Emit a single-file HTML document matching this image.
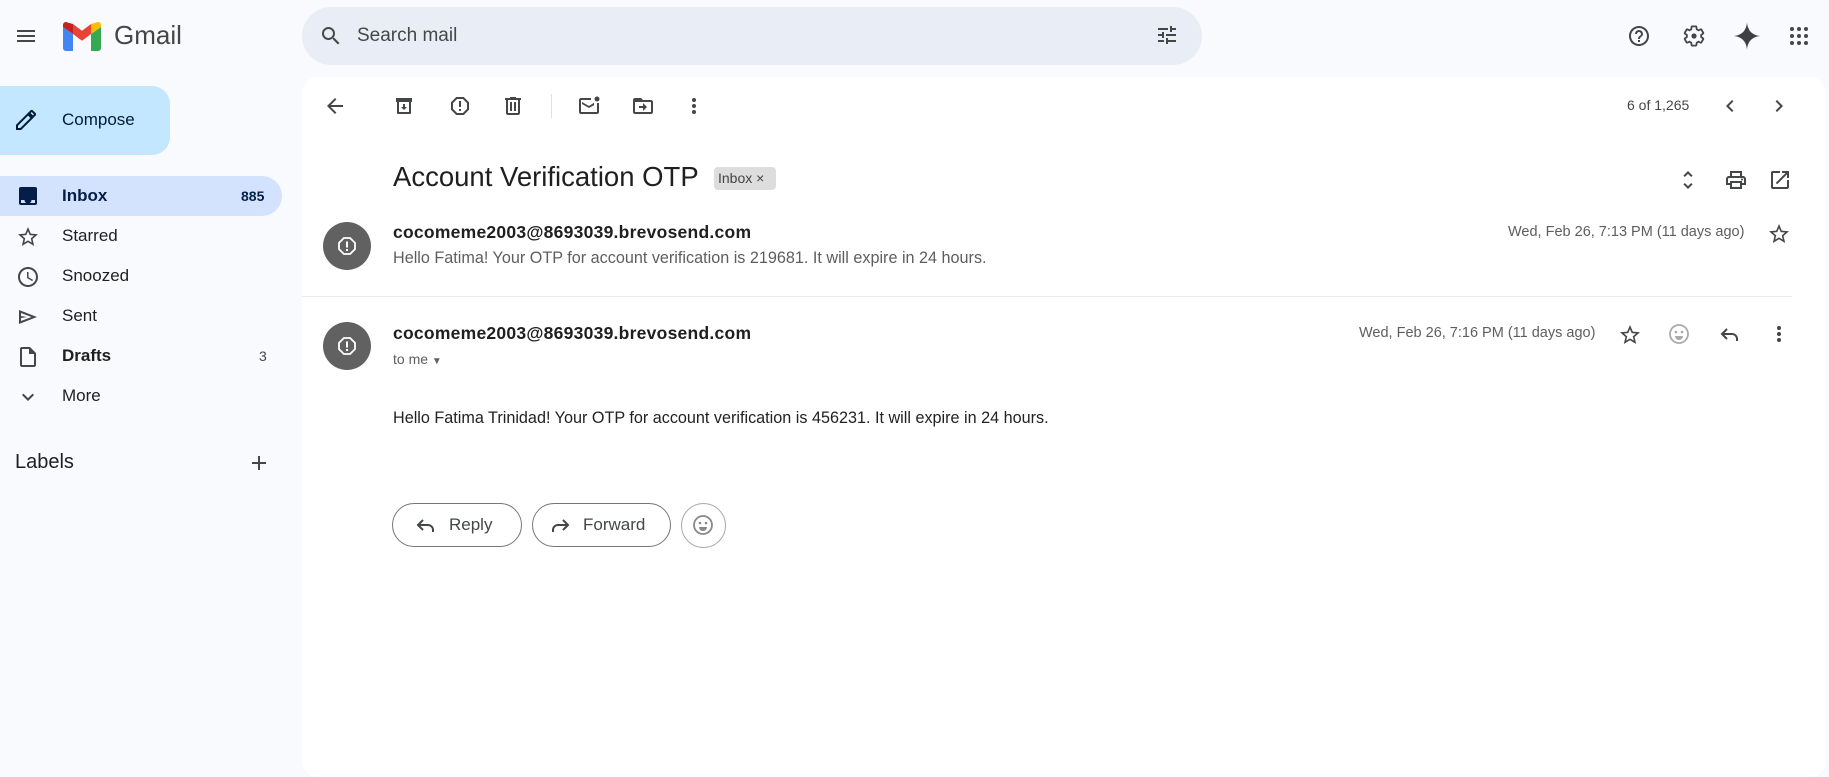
<!DOCTYPE html>
<html><head><meta charset="utf-8"><style>
*{margin:0;padding:0;box-sizing:border-box}
body{width:1829px;height:755px;overflow:hidden;background:#f8fafd;font-family:"Liberation Sans",Arial,sans-serif;color:#1f1f1f;position:relative}
.a{position:absolute}
svg{display:block}
.ic{position:absolute;width:24px;height:24px;fill:#444746}
.nav{position:absolute;left:62px;font-size:17px;color:#1f1f1f}
</style></head><body>
<!-- header -->
<svg class="ic" style="left:14px;top:24px" viewBox="0 0 24 24"><path d="M3 18h18v-2H3v2zm0-5h18v-2H3v2zm0-7v2h18V6H3z"/></svg>
<svg class="a" style="left:63px;top:22px" width="38" height="29" viewBox="0 0 38 29">
<path d="M3 29h7V12L0 5v21c0 1.7 1.3 3 3 3z" fill="#4285f4"/>
<path d="M28 29h7c1.7 0 3-1.3 3-3V5l-10 7z" fill="#34a853"/>
<path d="M28 2v10l10-7V3c0-2.5-2.8-3.9-4.8-2.4z" fill="#fbbc04"/>
<path d="M10 12V2l9 6.8L28 2v10l-9 6.8z" fill="#ea4335"/>
<path d="M0 3v2l10 7V2L4.8.6C2.8-.9 0 .5 0 3z" fill="#c5221f"/>
</svg>
<div class="a" style="left:114px;top:20px;font-size:26px;color:#444746">Gmail</div>
<div class="a" style="left:302px;top:7px;width:900px;height:58px;border-radius:29px;background:#e9eef6"></div>
<svg class="ic" style="left:319px;top:24px" viewBox="0 0 24 24"><path d="M15.5 14h-.79l-.28-.27A6.47 6.47 0 0 0 16 9.5 6.5 6.5 0 1 0 9.5 16c1.61 0 3.090-.59 4.23-1.57l.27.28v.79l5 4.99L20.49 19l-4.99-5zm-6 0C7.01 14 5 11.99 5 9.5S7.01 5 9.5 5 14 7.01 14 9.5 11.99 14 9.5 14z"/></svg>
<div class="a" style="left:357px;top:25px;font-size:19px;color:#444746">Search mail</div>
<svg class="ic" style="left:1155px;top:23px" viewBox="0 0 24 24"><path d="M3 17v2h6v-2H3zM3 5v2h10V5H3zm10 16v-2h8v-2h-8v-2h-2v6h2zM7 9v2H3v2h4v2h2V9H7zm14 4v-2H11v2h10zm-6-4h2V7h4V5h-4V3h-2v6z"/></svg>
<svg class="ic" style="left:1627px;top:24px" viewBox="0 0 24 24"><path d="M11 18h2v-2h-2v2zm1-16C6.48 2 2 6.48 2 12s4.48 10 10 10 10-4.48 10-10S17.52 2 12 2zm0 18c-4.410 0-8-3.59-8-8s3.59-8 8-8 8 3.59 8 8-3.59 8-8 8zm0-14c-2.21 0-4 1.79-4 4h2c0-1.1.9-2 2-2s2 .9 2 2c0 2-3 1.75-3 5h2c0-2.25 3-2.5 3-5 0-2.21-1.79-4-4-4z"/></svg>
<svg class="ic" style="left:1682px;top:24px" viewBox="0 0 24 24"><path d="M19.14 12.94c.04-.3.06-.61.06-.94 0-.32-.02-.64-.07-.94l2.030-1.58a.49.49 0 0 0 .12-.61l-1.92-3.32a.49.49 0 0 0-.59-.22l-2.39.96c-.5-.38-1.03-.7-1.62-.94l-.36-2.54a.48.48 0 0 0-.48-.41h-3.84c-.24 0-.43.17-.47.41l-.36 2.54c-.59.24-1.13.57-1.62.94l-2.39-.96a.48.48 0 0 0-.59.22L2.74 8.87c-.12.21-.08.47.12.61l2.03 1.58c-.05.3-.09.63-.09.94s.02.64.07.94l-2.03 1.58a.49.49 0 0 0-.12.61l1.92 3.32c.12.22.37.29.59.22l2.39-.96c.5.38 1.03.7 1.62.94l.36 2.54c.05.24.24.41.48.41h3.84c.24 0 .44-.17.47-.41l.36-2.54c.59-.24 1.13-.56 1.62-.94l2.39.96c.22.08.47 0 .59-.22l1.92-3.32c.12-.22.07-.47-.12-.61l-2.01-1.58z" fill="none" stroke="#444746" stroke-width="1.8"/><circle cx="12" cy="12" r="2.6"/></svg>
<svg class="a" style="left:1732px;top:21px" width="30" height="30" viewBox="0 0 24 24"><path d="M12 1C12.5 7.5 16 11.5 23 12 16 12.5 12.5 16.5 12 23 11.5 16.5 8 12.5 1 12 8 11.5 11.5 7.5 12 1z" fill="#3c4043"/></svg>
<svg class="ic" style="left:1787px;top:24px" viewBox="0 0 24 24"><g fill="#444746"><circle cx="5" cy="5" r="2"/><circle cx="12" cy="5" r="2"/><circle cx="19" cy="5" r="2"/><circle cx="5" cy="12" r="2"/><circle cx="12" cy="12" r="2"/><circle cx="19" cy="12" r="2"/><circle cx="5" cy="19" r="2"/><circle cx="12" cy="19" r="2"/><circle cx="19" cy="19" r="2"/></g></svg>

<!-- sidebar -->
<div class="a" style="left:0;top:86px;width:170px;height:69px;background:#c2e7ff;border-radius:0 18px 18px 0"></div>
<svg class="ic" style="left:14px;top:108px" viewBox="0 0 24 24"><path d="M3 17.25V21h3.75L17.81 9.94l-3.75-3.75L3 17.25zM20.71 7.04a1 1 0 0 0 0-1.41l-2.34-2.34a1 1 0 0 0-1.41 0l-1.83 1.83 3.75 3.75 1.83-1.83z" fill="none" stroke="#001d35" stroke-width="2"/></svg>
<div class="a" style="left:62px;top:110px;font-size:17px;color:#001d35">Compose</div>
<div class="a" style="left:0;top:176px;width:282px;height:40px;background:#d3e3fd;border-radius:0 20px 20px 0"></div>
<svg class="ic" style="left:16px;top:184px" viewBox="0 0 24 24"><path d="M19 3H5a2 2 0 0 0-2 2v14a2 2 0 0 0 2 2h14a2 2 0 0 0 2-2V5a2 2 0 0 0-2-2zm0 16H5v-3h3.5a3.5 3.5 0 0 0 7 0H19v3z" fill="#041e49"/><rect x="4" y="4" width="16" height="11" fill="#041e49"/></svg>
<div class="nav" style="top:186px;font-weight:bold;color:#041e49">Inbox</div>
<div class="a" style="left:241px;top:188px;font-size:14px;font-weight:bold;color:#041e49">885</div>
<svg class="ic" style="left:16px;top:225px" viewBox="0 0 24 24"><path d="M22 9.24l-7.19-.62L12 2 9.19 8.63 2 9.24l5.46 4.73L5.82 21 12 17.27 18.18 21l-1.63-7.03L22 9.24zM12 15.4l-3.76 2.27 1-4.28-3.32-2.88 4.38-.38L12 6.1l1.71 4.04 4.38.38-3.32 2.88 1 4.28L12 15.4z"/></svg>
<div class="nav" style="top:226px">Starred</div>
<svg class="ic" style="left:16px;top:265px" viewBox="0 0 24 24"><path d="M11.99 2C6.47 2 2 6.48 2 12s4.47 10 9.99 10C17.52 22 22 17.52 22 12S17.52 2 11.99 2zM12 20c-4.42 0-8-3.58-8-8s3.58-8 8-8 8 3.58 8 8-3.58 8-8 8zm.5-13H11v6l5.25 3.15.75-1.23-4.5-2.67z"/></svg>
<div class="nav" style="top:266px">Snoozed</div>
<svg class="ic" style="left:16px;top:305px" viewBox="0 0 24 24"><path d="M3 5v14l18-7L3 5zm2 3l10.5 4L5 16v-3l6-1-6-1V8z"/></svg>
<div class="nav" style="top:306px">Sent</div>
<svg class="ic" style="left:16px;top:345px" viewBox="0 0 24 24"><path d="M14 2H6c-1.1 0-2 .9-2 2v16c0 1.1.9 2 2 2h12c1.1 0 2-.9 2-2V8l-6-6zm4 18H6V4h7v5h5v11z"/></svg>
<div class="nav" style="top:346px;font-weight:bold">Drafts</div>
<div class="a" style="left:259px;top:348px;font-size:14px;color:#444746">3</div>
<svg class="ic" style="left:16px;top:385px" viewBox="0 0 24 24"><path d="M16.59 8.59L12 13.17 7.41 8.59 6 10l6 6 6-6z"/></svg>
<div class="nav" style="top:386px">More</div>
<div class="a" style="left:15px;top:451px;font-size:20px">Labels</div>
<svg class="ic" style="left:247px;top:451px" viewBox="0 0 24 24"><path d="M19 13h-6v6h-2v-6H5v-2h6V5h2v6h6v2z"/></svg>

<!-- main panel -->
<div class="a" style="left:302px;top:77px;width:1524px;height:700px;background:#fff;border-radius:16px"></div>
<svg class="ic" style="left:323px;top:94px" viewBox="0 0 24 24"><path d="M20 11H7.83l5.59-5.59L12 4l-8 8 8 8 1.41-1.41L7.83 13H20v-2z"/></svg>
<svg class="ic" style="left:392px;top:94px" viewBox="0 0 24 24"><path d="M20 4H4v4h1v11a1 1 0 0 0 1 1h12a1 1 0 0 0 1-1V8h1V4zM17 18H7V8h10v10zM13 10h-2v3H9l3 3 3-3h-2z"/><rect x="4" y="4" width="16" height="2"/></svg>
<svg class="ic" style="left:448px;top:94px" viewBox="0 0 24 24"><path d="M15.73 3H8.27L3 8.27v7.46L8.27 21h7.46L21 15.73V8.27L15.73 3zM19 14.9L14.9 19H9.1L5 14.9V9.1L9.1 5h5.8L19 9.1v5.8zM11 7h2v6h-2zm0 8h2v2h-2z"/></svg>
<svg class="ic" style="left:501px;top:94px" viewBox="0 0 24 24"><path d="M15 4V3H9v1H4v2h1v13c0 1.1.9 2 2 2h10c1.1 0 2-.9 2-2V6h1V4h-5zm2 15H7V6h10v13zM9 8h2v9H9zm4 0h2v9h-2z"/></svg>
<div class="a" style="left:551px;top:94px;width:1px;height:24px;background:#e0e0e0"></div>
<svg class="ic" style="left:577px;top:94px" viewBox="0 0 24 24"><path d="M20 9v9H4V6h10V4H4c-1.1 0-2 .9-2 2v12c0 1.1.9 2 2 2h16c1.1 0 2-.9 2-2V9h-2zm-8 3L5 8v2l7 4 5-2.9V8.8z"/><circle cx="20" cy="5" r="2.5"/></svg>
<svg class="ic" style="left:631px;top:94px" viewBox="0 0 24 24"><path d="M20 6h-8l-2-2H4c-1.1 0-2 .9-2 2v12c0 1.1.9 2 2 2h16c1.1 0 2-.9 2-2V8c0-1.1-.9-2-2-2zm0 12H4V8h16v10zm-8-1l4-4-4-4v3H8v2h4z"/></svg>
<svg class="ic" style="left:682px;top:94px" viewBox="0 0 24 24"><circle cx="12" cy="6" r="2"/><circle cx="12" cy="12" r="2"/><circle cx="12" cy="18" r="2"/></svg>
<div class="a" style="left:1627px;top:97px;font-size:14px;color:#444746">6 of 1,265</div>
<svg class="ic" style="left:1718px;top:94px" viewBox="0 0 24 24"><path d="M15.41 7.41L14 6l-6 6 6 6 1.41-1.41L10.83 12z"/></svg>
<svg class="ic" style="left:1767px;top:94px" viewBox="0 0 24 24"><path d="M10 6L8.59 7.41 13.17 12l-4.58 4.59L10 18l6-6z"/></svg>

<div class="a" style="left:393px;top:161px;font-size:27.5px;color:#1f1f1f">Account Verification OTP</div>
<div class="a" style="left:714px;top:167px;width:62px;height:23px;background:#ddd;border-radius:4px;font-size:14px;color:#444;padding:3px 0 0 4px">Inbox ×</div>
<svg class="ic" style="left:1676px;top:168px" viewBox="0 0 24 24"><path d="M12 5.83L15.17 9l1.41-1.41L12 3 7.41 7.59 8.83 9 12 5.83zm0 12.34L8.83 15l-1.41 1.41L12 21l4.59-4.59L15.17 15 12 18.17z"/></svg>
<svg class="ic" style="left:1724px;top:168px" viewBox="0 0 24 24"><path d="M19 8h-1V3H6v5H5c-1.66 0-3 1.34-3 3v6h4v4h12v-4h4v-6c0-1.66-1.34-3-3-3zM8 5h8v3H8V5zm8 14H8v-4h8v4zm2-4v-2H6v2H4v-4c0-.55.45-1 1-1h14c.55 0 1 .45 1 1v4h-2z"/><circle cx="18" cy="11.5" r="1"/></svg>
<svg class="ic" style="left:1768px;top:168px" viewBox="0 0 24 24"><path d="M19 19H5V5h7V3H5a2 2 0 0 0-2 2v14a2 2 0 0 0 2 2h14c1.1 0 2-.9 2-2v-7h-2v7zM14 3v2h3.59l-9.83 9.83 1.41 1.41L19 6.41V10h2V3h-7z"/></svg>

<!-- message 1 -->
<div class="a" style="left:323px;top:222px;width:48px;height:48px;border-radius:50%;background:#616161"></div>
<svg class="a" style="left:335px;top:234px" width="24" height="24" viewBox="0 0 24 24"><path d="M8.9 4h6.2L20 8.9v6.2L15.1 20H8.9L4 15.1V8.9z" fill="none" stroke="#fff" stroke-width="1.8"/><rect x="11" y="7.5" width="2" height="6" fill="#fff"/><rect x="11" y="15" width="2" height="2" fill="#fff"/></svg>
<div class="a" style="left:393px;top:222px;font-size:17.5px;font-weight:bold;letter-spacing:.25px">cocomeme2003@8693039.brevosend.com</div>
<div class="a" style="left:393px;top:249px;font-size:16.2px;color:#5e5e5e">Hello Fatima! Your OTP for account verification is 219681. It will expire in 24 hours.</div>
<div class="a" style="left:1508px;top:224px;font-size:14.5px;color:#5e5e5e">Wed, Feb 26, 7:13 PM (11 days ago)</div>
<svg class="ic" style="left:1767px;top:222px" viewBox="0 0 24 24"><path d="M22 9.24l-7.19-.62L12 2 9.19 8.63 2 9.24l5.46 4.73L5.82 21 12 17.27 18.18 21l-1.63-7.03L22 9.24zM12 15.4l-3.76 2.27 1-4.28-3.32-2.88 4.38-.38L12 6.1l1.71 4.04 4.38.38-3.32 2.88 1 4.28L12 15.4z"/></svg>
<div class="a" style="left:302px;top:296px;width:1490px;height:1px;background:#e8eaed"></div>

<!-- message 2 -->
<div class="a" style="left:323px;top:322px;width:48px;height:48px;border-radius:50%;background:#616161"></div>
<svg class="a" style="left:335px;top:334px" width="24" height="24" viewBox="0 0 24 24"><path d="M8.9 4h6.2L20 8.9v6.2L15.1 20H8.9L4 15.1V8.9z" fill="none" stroke="#fff" stroke-width="1.8"/><rect x="11" y="7.5" width="2" height="6" fill="#fff"/><rect x="11" y="15" width="2" height="2" fill="#fff"/></svg>
<div class="a" style="left:393px;top:323px;font-size:17.5px;font-weight:bold;letter-spacing:.25px">cocomeme2003@8693039.brevosend.com</div>
<div class="a" style="left:393px;top:351px;font-size:14px;color:#5e5e5e">to me <span style="font-size:10px">▼</span></div>
<div class="a" style="left:1359px;top:325px;font-size:14.5px;color:#5e5e5e">Wed, Feb 26, 7:16 PM (11 days ago)</div>
<svg class="ic" style="left:1618px;top:323px" viewBox="0 0 24 24"><path d="M22 9.24l-7.19-.62L12 2 9.19 8.63 2 9.24l5.46 4.73L5.82 21 12 17.27 18.18 21l-1.63-7.03L22 9.24zM12 15.4l-3.76 2.27 1-4.28-3.32-2.88 4.38-.38L12 6.1l1.71 4.04 4.38.38-3.32 2.88 1 4.28L12 15.4z"/></svg>
<svg class="ic" style="left:1667px;top:322px" viewBox="0 0 24 24"><circle cx="12" cy="12" r="9" fill="none" stroke="#aaa" stroke-width="1.8"/><circle cx="9" cy="10" r="1.3" fill="#aaa"/><circle cx="15" cy="10" r="1.3" fill="#aaa"/><path d="M8 14h8a4 4 0 0 1-8 0z" fill="#aaa"/></svg>
<svg class="ic" style="left:1718px;top:322px" viewBox="0 0 24 24"><path d="M9 7L4 12l5 5M4 12h10a5 5 0 0 1 5 5v2" fill="none" stroke="#444746" stroke-width="2"/></svg>
<svg class="ic" style="left:1767px;top:322px" viewBox="0 0 24 24"><circle cx="12" cy="6" r="2"/><circle cx="12" cy="12" r="2"/><circle cx="12" cy="18" r="2"/></svg>
<div class="a" style="left:393px;top:409px;font-size:16.2px;color:#222">Hello Fatima Trinidad! Your OTP for account verification is 456231. It will expire in 24 hours.</div>

<!-- buttons -->
<div class="a" style="left:392px;top:503px;width:130px;height:44px;border:1px solid #747775;border-radius:22px"></div>
<svg class="ic" style="left:414px;top:513px" viewBox="0 0 24 24"><path d="M9 7L4 12l5 5M4 12h10a5 5 0 0 1 5 5v2" fill="none" stroke="#444746" stroke-width="2"/></svg>
<div class="a" style="left:449px;top:515px;font-size:17px;color:#444746">Reply</div>
<div class="a" style="left:532px;top:503px;width:139px;height:44px;border:1px solid #747775;border-radius:22px"></div>
<svg class="ic" style="left:548px;top:513px" viewBox="0 0 24 24"><path d="M15 7l5 5-5 5M20 12H10a5 5 0 0 0-5 5v2" fill="none" stroke="#444746" stroke-width="2"/></svg>
<div class="a" style="left:583px;top:515px;font-size:17px;color:#444746">Forward</div>
<div class="a" style="left:681px;top:503px;width:45px;height:45px;border:1px solid #aaa;border-radius:50%"></div>
<svg class="ic" style="left:691px;top:513px" viewBox="0 0 24 24"><circle cx="12" cy="12" r="9" fill="none" stroke="#888" stroke-width="1.8"/><circle cx="9" cy="10" r="1.3" fill="#888"/><circle cx="15" cy="10" r="1.3" fill="#888"/><path d="M8 14h8a4 4 0 0 1-8 0z" fill="#888"/></svg>
</body></html>
